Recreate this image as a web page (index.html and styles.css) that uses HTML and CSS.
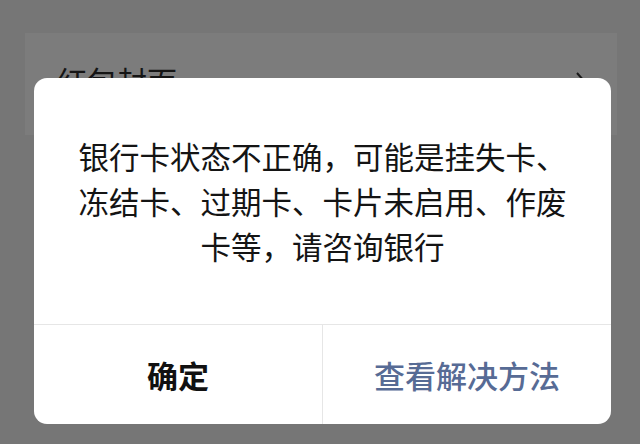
FILE: index.html
```html
<!DOCTYPE html>
<html lang="zh-CN">
<head>
<meta charset="utf-8">
<link rel="stylesheet" href="styles.css">
</head>
<body>
<div class="page">
  <div class="card">
    <span class="card-title">红包封面</span>
    <svg class="chev" width="12" height="22" viewBox="0 0 12 22"><polyline points="2,2 10,11 2,20" fill="none" stroke="#1a1a1a" stroke-width="2"/></svg>
  </div>
</div>
<div class="dialog">
  <div class="dialog-body">
    <p class="msg">
      <span class="line">银行卡状态不正确，可能是挂失卡、</span>
      <span class="line">冻结卡、过期卡、卡片未启用、作废</span>
      <span class="line">卡等，请咨询银行</span>
    </p>
  </div>
  <div class="dialog-actions">
    <div class="btn btn-primary">确定</div>
    <div class="btn btn-link">查看解决方法</div>
  </div>
</div>
</body>
</html>
```
FILE: styles.css
```css
html, body {
  margin: 0;
  padding: 0;
}
body {
  width: 640px;
  height: 444px;
  overflow: hidden;
  background: #767676;
  font-family: "Noto Sans CJK SC", "Noto Sans", sans-serif;
  position: relative;
}
.page {
  padding-top: 33px;
  padding-left: 25px;
}
.card {
  width: 592px;
  height: 102px;
  background: #7c7c7c;
  box-sizing: border-box;
  padding: 32px 30px 0 32px;
  display: flex;
  align-items: flex-start;
  justify-content: space-between;
}
.card-title {
  font-size: 30px;
  line-height: 30px;
  color: #151515;
}
.chev {
  margin-top: 6px;
}
.dialog {
  position: absolute;
  left: 34px;
  top: 78px;
  width: 577px;
  height: 346px;
  background: #fff;
  border-radius: 13px;
  display: flex;
  flex-direction: column;
  overflow: hidden;
}
.dialog-body {
  height: 246px;
  display: flex;
  align-items: center;
  justify-content: center;
}
.msg {
  margin: 0;
  font-size: 30.5px;
  line-height: 45px;
  color: #141414;
  text-align: center;
}
.line {
  display: block;
  white-space: nowrap;
}
.dialog-actions {
  flex: 1;
  display: flex;
  border-top: 1px solid #e6e6e6;
}
.btn {
  flex: 1;
  display: flex;
  align-items: center;
  justify-content: center;
  font-size: 31px;
}
.btn-primary {
  font-weight: 700;
  color: #111;
  border-right: 1px solid #e6e6e6;
}
.btn-link {
  color: #576b95;
  font-weight: 500;
}
```
